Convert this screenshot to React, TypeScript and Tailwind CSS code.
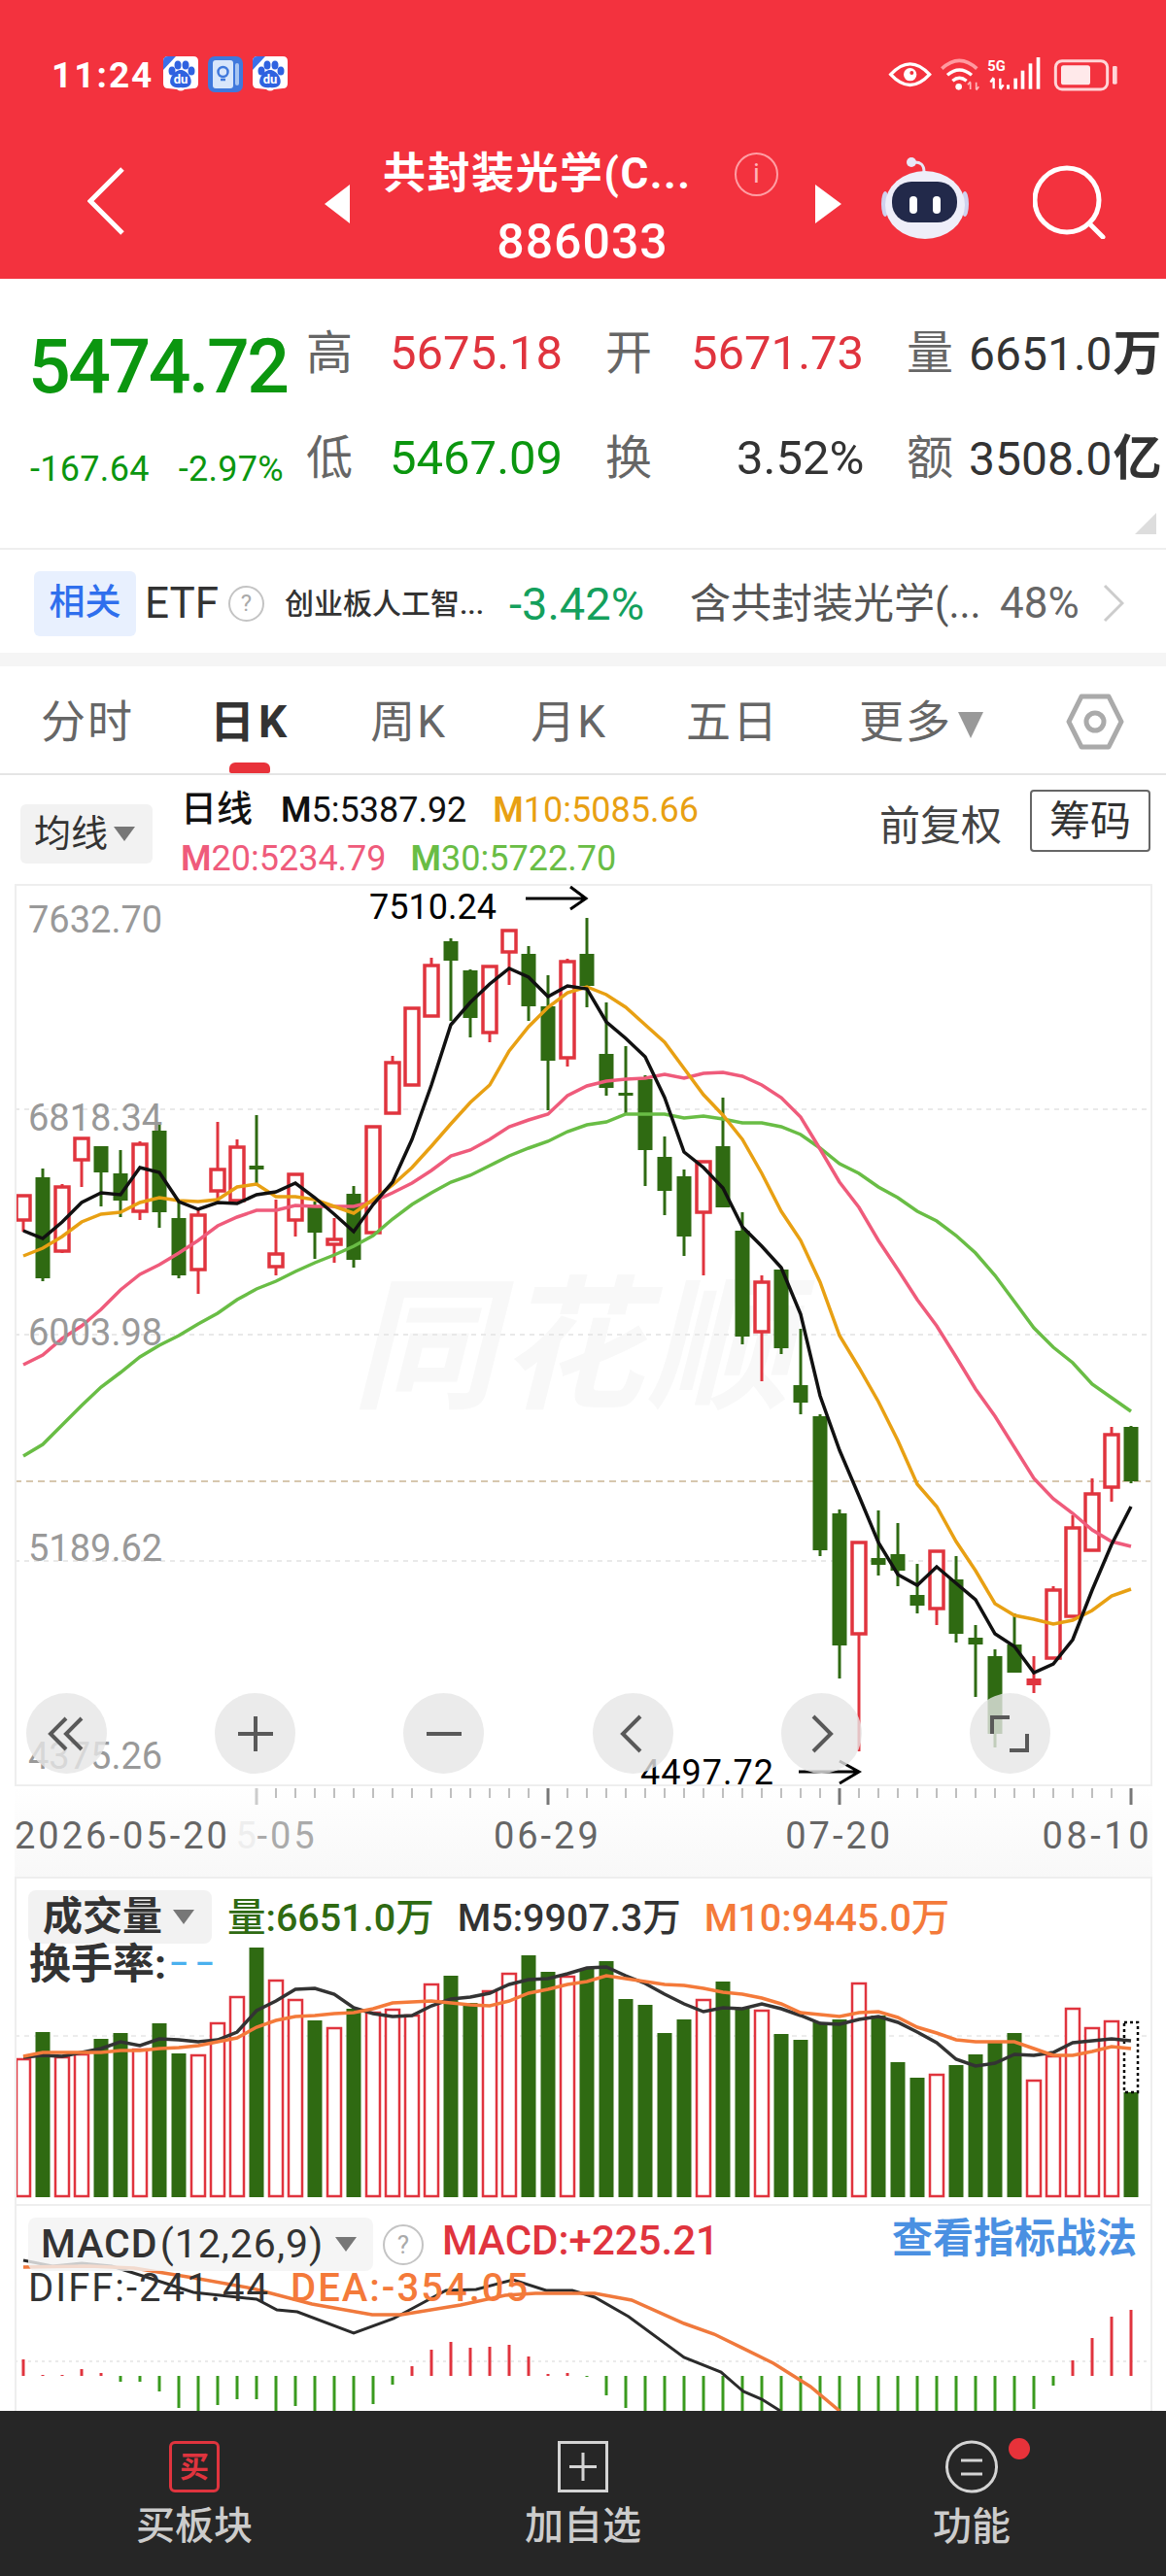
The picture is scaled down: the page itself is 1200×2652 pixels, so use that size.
const red = "#e0343e";
const green = "#2f6a12";

// page coordinates: [body top, body bottom, wick top, wick bottom, is red]
const candles: [number, number, number, number, number][] = [
  [1230, 1257, 1230, 1268, 1], [1212, 1316, 1203, 1319, 0], [1221, 1289, 1219, 1290, 1], [1171, 1195, 1171, 1222, 1],
  [1180, 1207, 1180, 1242, 0], [1208, 1236, 1184, 1253, 0], [1177, 1248, 1175, 1256, 1], [1164, 1248, 1157, 1264, 0],
  [1254, 1313, 1237, 1316, 0], [1250, 1308, 1243, 1332, 1], [1203, 1227, 1155, 1237, 1], [1180, 1237, 1173, 1237, 1],
  [1200, 1204, 1148, 1220, 0], [1290, 1305, 1235, 1313, 1], [1208, 1257, 1208, 1273, 1], [1243, 1269, 1237, 1296, 0],
  [1275, 1282, 1254, 1300, 1], [1229, 1297, 1221, 1305, 0], [1159, 1270, 1159, 1270, 1], [1093, 1147, 1087, 1147, 1],
  [1037, 1118, 1037, 1118, 1], [993, 1047, 986, 1047, 1], [969, 989, 966, 1051, 0], [999, 1048, 998, 1068, 0],
  [994, 1064, 994, 1073, 1], [957, 981, 957, 1014, 1], [982, 1036, 974, 1051, 0], [1036, 1092, 1004, 1143, 0],
  [989, 1090, 987, 1098, 1], [982, 1015, 945, 1037, 0], [1085, 1120, 1032, 1128, 0], [1125, 1128, 1077, 1147, 0],
  [1111, 1184, 1107, 1221, 0], [1191, 1226, 1170, 1251, 0], [1211, 1273, 1204, 1293, 0], [1195, 1249, 1195, 1313, 1],
  [1180, 1243, 1130, 1243, 0], [1267, 1376, 1248, 1384, 0], [1319, 1372, 1313, 1422, 1], [1307, 1388, 1307, 1394, 0],
  [1426, 1444, 1368, 1456, 0], [1458, 1596, 1456, 1602, 0], [1558, 1694, 1554, 1728, 0], [1587, 1683, 1587, 1803, 1],
  [1604, 1611, 1555, 1622, 0], [1600, 1617, 1568, 1633, 0], [1642, 1653, 1610, 1661, 0], [1596, 1657, 1596, 1673, 1],
  [1626, 1682, 1602, 1691, 0], [1686, 1693, 1673, 1747, 0], [1705, 1785, 1698, 1799, 0], [1693, 1722, 1661, 1722, 0],
  [1728, 1735, 1705, 1743, 2], [1636, 1708, 1633, 1708, 1], [1572, 1665, 1560, 1665, 1], [1537, 1597, 1522, 1597, 1],
  [1476, 1532, 1469, 1546, 1], [1469, 1525, 1468, 1527, 0],
];

const m5 = [1267, 1275, 1258, 1238, 1228, 1230, 1202, 1207, 1237, 1245, 1238, 1239, 1230, 1227, 1218, 1233, 1250, 1268, 1240, 1217, 1173, 1117, 1055, 1032, 1013, 997, 1006, 1026, 1015, 1018, 1052, 1069, 1088, 1130, 1186, 1202, 1223, 1263, 1283, 1305, 1353, 1437, 1493, 1540, 1588, 1621, 1632, 1613, 1630, 1647, 1682, 1695, 1722, 1713, 1688, 1637, 1590, 1551];
const m10 = [1293, 1285, 1273, 1258, 1250, 1248, 1238, 1233, 1236, 1237, 1235, 1222, 1219, 1232, 1232, 1235, 1242, 1249, 1235, 1220, 1202, 1180, 1157, 1135, 1117, 1082, 1057, 1037, 1022, 1016, 1024, 1037, 1055, 1073, 1100, 1127, 1148, 1173, 1208, 1247, 1277, 1320, 1375, 1408, 1443, 1483, 1528, 1551, 1587, 1617, 1651, 1663, 1667, 1672, 1668, 1658, 1643, 1636];
const m20 = [1405, 1395, 1378, 1365, 1348, 1328, 1312, 1302, 1290, 1277, 1262, 1253, 1246, 1246, 1241, 1242, 1242, 1242, 1237, 1228, 1218, 1205, 1190, 1184, 1173, 1160, 1153, 1147, 1128, 1118, 1113, 1111, 1110, 1106, 1110, 1105, 1104, 1108, 1117, 1130, 1150, 1183, 1217, 1243, 1277, 1307, 1338, 1365, 1397, 1430, 1458, 1490, 1522, 1543, 1558, 1575, 1587, 1592];
const m30 = [1499, 1487, 1467, 1447, 1428, 1413, 1397, 1385, 1375, 1363, 1352, 1338, 1327, 1319, 1309, 1300, 1292, 1283, 1272, 1255, 1240, 1228, 1217, 1210, 1200, 1190, 1182, 1175, 1165, 1158, 1155, 1147, 1147, 1147, 1151, 1149, 1152, 1156, 1156, 1160, 1168, 1182, 1198, 1208, 1222, 1233, 1247, 1257, 1272, 1290, 1313, 1340, 1367, 1387, 1403, 1425, 1439, 1453];

const volTops = [2120, 2092, 2118, 2115, 2099, 2093, 2110, 2083, 2114, 2116, 2083, 2056, 2005, 2039, 2059, 2080, 2088, 2068, 2072, 2069, 2075, 2043, 2034, 2062, 2050, 2032, 2013, 2030, 2035, 2027, 2019, 2058, 2064, 2093, 2079, 2059, 2040, 2068, 2070, 2094, 2100, 2082, 2079, 2042, 2075, 2123, 2139, 2136, 2126, 2115, 2103, 2093, 2142, 2117, 2068, 2088, 2081, 2154];
const volRed = [1, 0, 1, 1, 0, 0, 1, 0, 0, 1, 1, 1, 0, 1, 1, 0, 1, 0, 1, 1, 1, 1, 0, 0, 1, 1, 0, 0, 1, 0, 0, 0, 0, 0, 0, 1, 0, 0, 1, 0, 0, 0, 0, 1, 0, 0, 0, 1, 0, 0, 0, 0, 1, 1, 1, 1, 1, 0];
const volM5 = [2118, 2116, 2117, 2113, 2109, 2102, 2106, 2099, 2100, 2102, 2100, 2092, 2070, 2060, 2048, 2047, 2053, 2067, 2073, 2076, 2075, 2065, 2058, 2056, 2052, 2043, 2038, 2037, 2032, 2026, 2025, 2034, 2042, 2053, 2063, 2071, 2067, 2068, 2063, 2068, 2075, 2083, 2084, 2079, 2076, 2082, 2092, 2103, 2120, 2127, 2124, 2115, 2116, 2113, 2103, 2101, 2099, 2101];
const volM10 = [2117, 2113, 2113, 2113, 2113, 2111, 2111, 2109, 2108, 2106, 2102, 2098, 2087, 2080, 2076, 2075, 2073, 2072, 2068, 2062, 2061, 2060, 2062, 2064, 2065, 2060, 2052, 2048, 2043, 2040, 2034, 2037, 2040, 2043, 2044, 2047, 2051, 2053, 2057, 2063, 2072, 2074, 2076, 2072, 2071, 2077, 2087, 2093, 2100, 2102, 2102, 2102, 2109, 2116, 2116, 2112, 2107, 2109];

const macdEnds = [2429, 2445, 2445, 2439, 2443, 2452, 2452, 2462, 2479, 2482, 2476, 2470, 2470, 2483, 2477, 2483, 2483, 2483, 2475, 2455, 2436, 2419, 2411, 2417, 2416, 2414, 2426, 2444, 2443, 2447, 2466, 2479, 2483, 2483, 2483, 2483, 2483, 2483, 2483, 2483, 2483, 2483, 2483, 2483, 2483, 2483, 2483, 2483, 2483, 2483, 2483, 2483, 2480, 2456, 2430, 2407, 2385, 2378];
const diff = "24,2327 54,2333 84,2330 115,2333 153,2345 199,2360 264,2367 285,2378 306,2380 364,2402 405,2387 459,2358 490,2357 528,2347 562,2358 589,2358 612,2365 647,2385 704,2427 742,2442 765,2462 784,2470 803,2482";
const dea = "24,2334 92,2333 138,2335 199,2345 260,2356 321,2372 383,2383 413,2383 474,2373 520,2363 551,2361 612,2361 650,2368 704,2392 735,2403 796,2433 834,2457 864,2482";

const cx = (i: number) => 24 + i * 20;
const points = (ys: number[]) => ys.map((y, i) => `${cx(i)},${y}`).join(" ");

function MainChart() {
  return (
    <svg width={1171} height={929} viewBox="15 910 1171 929" className="block">
      <text x={362} y={1438} fontSize={148} fontStyle="italic" fontWeight={700} fill="#f8f8f8" letterSpacing={4}>同花顺</text>
      {[1142, 1374, 1607].map((y) => (
        <line key={y} x1={15} x2={1186} y1={y} y2={y} stroke="#e2e2e2" strokeWidth={1.5} strokeDasharray="5 5" />
      ))}
      <line x1={15} x2={1186} y1={1525} y2={1525} stroke="#c9b594" strokeWidth={1.5} strokeDasharray="7 5" />
      {candles.map(([bt, bb, wt, wb, up], i) => {
        const x = cx(i);
        const color = up ? "#e0343e" : green;
        return (
          <g key={i}>
            <line x1={x} x2={x} y1={wt} y2={bt} stroke={color} strokeWidth={3} />
            <line x1={x} x2={x} y1={bb} y2={wb} stroke={color} strokeWidth={3} />
            {up === 1 ? (
              <rect x={x - 7} y={bt + 1} width={14} height={bb - bt - 2} fill="#fff" stroke={color} strokeWidth={3.5} />
            ) : (
              <rect x={x - 7.5} y={bt} width={15} height={bb - bt} fill={up === 2 ? color : green} />
            )}
          </g>
        );
      })}
      <polyline points={points(m30)} fill="none" stroke="#69bd45" strokeWidth={3.5} />
      <polyline points={points(m20)} fill="none" stroke="#ef5b7b" strokeWidth={3.5} />
      <polyline points={points(m10)} fill="none" stroke="#e8a013" strokeWidth={3.5} />
      <polyline points={points(m5)} fill="none" stroke="#111" strokeWidth={3.5} />
      <path d="M541 925H603M587 913L603 925L587 936" fill="none" stroke="#000" strokeWidth={3} />
      <path d="M822 1824H884M864 1813L884 1824L864 1836" fill="none" stroke="#000" strokeWidth={3} />
    </svg>
  );
}

function VolumeChart() {
  return (
    <svg width={1171} height={337} viewBox="15 1932 1171 337" className="block">
      <line x1={15} x2={1186} y1={2096} y2={2096} stroke="#e6e6e6" strokeWidth={1.5} strokeDasharray="5 5" />
      {volTops.map((top, i) => {
        const x = cx(i);
        return volRed[i] ? (
          <rect key={i} x={x - 7} y={top} width={14} height={2262 - top - 1} fill="#fff" stroke={red} strokeWidth={2.5} />
        ) : (
          <rect key={i} x={x - 7.5} y={top} width={15} height={2262 - top} fill={green} />
        );
      })}
      <rect x={1157} y={2082} width={14} height={72} fill="#fff" stroke="#000" strokeWidth={2.5} strokeDasharray="3 3" />
      <polyline points={points(volM5)} fill="none" stroke="#333" strokeWidth={3.5} />
      <polyline points={points(volM10)} fill="none" stroke="#f47a3a" strokeWidth={3.5} />
    </svg>
  );
}

function MacdChart() {
  return (
    <svg width={1171} height={213} viewBox="15 2269 1171 213" className="block">
      <line x1={15} x2={1186} y1={2431} y2={2431} stroke="#e4e4e4" strokeWidth={1.5} strokeDasharray="3 4" />
      {macdEnds.map((end, i) => (
        <line key={i} x1={cx(i)} x2={cx(i)} y1={2446} y2={end} stroke={end < 2446 ? red : "#3a9a1e"} strokeWidth={3} />
      ))}
      <polyline points={diff} fill="none" stroke="#2b2b2b" strokeWidth={3} />
      <polyline points={dea} fill="none" stroke="#f0793c" strokeWidth={3.5} />
    </svg>
  );
}

function Ticks() {
  const xs: number[] = [];
  for (let x = 264; x <= 1164; x += 20) xs.push(x);
  return (
    <svg width={1171} height={20} viewBox="15 1839 1171 20" className="block">
      {xs.map((x) => {
        const major = (x - 264) % 300 === 0;
        return (
          <line key={x} x1={x} x2={x} y1={1841} y2={major ? 1858 : 1851} stroke={x === 264 ? "#ccc" : major ? "#777" : "#aaa"} strokeWidth={major ? 3 : 1.5} />
        );
      })}
    </svg>
  );
}

function BaiduIcon() {
  return (
    <svg width={36} height={37} viewBox="0 0 36 37" className="block">
      <path d="M5 0H31Q36 0 36 5V28Q36 33 31 33L22 34Q18 37 14 34L5 33Q0 33 0 28V5Q0 0 5 0Z" fill="#fff" />
      <path d="M0 14V5Q0 0 5 0H13Z" fill="#3b6fe8" />
      <g fill="#2f62e0">
        <ellipse cx={9} cy={15} rx={3.5} ry={4.5} />
        <ellipse cx={15} cy={9} rx={3.5} ry={4.5} />
        <ellipse cx={23} cy={9} rx={3.5} ry={4.5} />
        <ellipse cx={29} cy={15} rx={3.5} ry={4.5} />
        <path d="M18 14C25 14 31 24 28 29Q25 33 18 32Q11 33 8 29C5 24 11 14 18 14Z" />
      </g>
      <text x={18} y={28} fontSize={13} fontWeight={700} fill="#fff" textAnchor="middle">du</text>
    </svg>
  );
}

function BulbIcon() {
  return (
    <svg width={36} height={37} viewBox="0 0 36 37" className="block">
      <rect width={36} height={37} rx={7} fill="#3f78dc" />
      <rect x={5} y={4} width={21} height={29} rx={3} fill="#d8e6fb" />
      <rect x={28} y={7} width={4} height={23} rx={2} fill="#a7c5f2" />
      <circle cx={15.5} cy={16} r={5} fill="none" stroke="#3f78dc" strokeWidth={2.5} />
      <path d="M13 24H18" stroke="#3f78dc" strokeWidth={2.5} />
    </svg>
  );
}

function StatusIcons() {
  return (
    <svg width={270} height={55} viewBox="0 0 810 165" className="block">
      <path d="M50 80Q110 15 170 80Q110 145 50 80Z" fill="none" stroke="#fff" strokeWidth={10} />
      <circle cx={110} cy={80} r={20} fill="#fff" />
      <circle cx={115} cy={75} r={6} fill="#f3323e" />
      <path d="M208 62Q262 12 316 62" fill="none" stroke="#ff9aa0" strokeWidth={11} />
      <path d="M225 82Q262 50 300 82M241 100Q262 82 284 100" fill="none" stroke="#fff" strokeWidth={10} />
      <circle cx={260} cy={118} r={10} fill="#fff" />
      <path d="M296 104V126M288 112L296 102M314 104V126M322 118L314 128" stroke="#ffb8bc" strokeWidth={5} fill="none" />
      <text x={349} y={70} fontSize={44} fontWeight={700} fill="#fff" fontFamily="Roboto">5G</text>
      <path d="M368 92V124M358 104L368 90M388 92V124M398 112L388 126" stroke="#fff" strokeWidth={7} fill="none" />
      <g fill="#fff">
        <rect x={408} y={112} width={9} height={13} />
        <rect x={430} y={92} width={11} height={33} />
        <rect x={452} y={68} width={11} height={57} />
        <rect x={476} y={46} width={11} height={79} />
        <rect x={500} y={27} width={11} height={98} />
      </g>
      <rect x={559} y={38} width={160} height={88} rx={20} fill="none" stroke="#ffd5d7" strokeWidth={9} />
      <rect x={576} y={52} width={90} height={60} rx={8} fill="#ffe9ea" />
      <rect x={735} y={54} width={14} height={56} rx={4} fill="#ffd5d7" />
    </svg>
  );
}

function Robot() {
  return (
    <svg width={90} height={84} viewBox="0 0 90 84" className="block">
      <path d="M33 5Q44 4 44 15" fill="none" stroke="#e6e6f6" strokeWidth={3} />
      <circle cx={31} cy={5} r={5} fill="#e8e8f8" />
      <ellipse cx={4} cy={48} rx={4} ry={13} fill="#cfd2ee" />
      <ellipse cx={86} cy={48} rx={4} ry={13} fill="#cfd2ee" />
      <ellipse cx={45} cy={49} rx={41} ry={35} fill="#eeeef9" />
      <rect x={11} y={25} width={67} height={42} rx={20} fill="#22294a" />
      <rect x={29} y={40} width={8} height={18} rx={4} fill="#fff" />
      <rect x={53} y={40} width={8} height={18} rx={4} fill="#fff" />
    </svg>
  );
}

function Triangle({ className }: { className: string }) {
  return <span className={`inline-block h-0 w-0 border-x-[11px] border-t-[15px] border-x-transparent ${className}`} />;
}

function HelpDot({ size, text }: { size: string; text: string }) {
  return (
    <span className={`flex items-center justify-center rounded-full border-2 border-[#c4c4c4] text-[#aaa] ${size} ${text}`}>?</span>
  );
}

function RoundButton({ children }: { children: React.ReactNode }) {
  return (
    <span className="flex h-[83px] w-[83px] items-center justify-center rounded-full bg-[#e6e6e6]/80">
      <svg width={44} height={44} viewBox="0 0 44 44" fill="none" stroke="#595959" strokeWidth={4} className="block">
        {children}
      </svg>
    </span>
  );
}

function AxisLabel({ top, children }: { top: string; children: string }) {
  return <span className={`absolute left-[14px] text-[38px] leading-none text-[#999] ${top}`}>{children}</span>;
}

function Ma({ name, value }: { name: string; value: string }) {
  return (
    <span>
      <b className="font-semibold">M</b>
      {name}:{value}
    </span>
  );
}

export default function App() {
  return (
    <div className="w-[1200px] overflow-hidden bg-white font-['Roboto','Noto_Sans_CJK_SC',sans-serif]">
      <header className="h-[287px] bg-[#f3323e] text-white">
        <div className="flex h-[150px] items-start pt-[50px]">
          <span className="ml-[53px] text-[37px] leading-[55px] font-bold tracking-[2px]">11:24</span>
          <div className="ml-[10px] mt-[8px] flex gap-[10px]">
            <BaiduIcon />
            <BulbIcon />
            <BaiduIcon />
          </div>
          <div className="ml-auto mr-[30px]">
            <StatusIcons />
          </div>
        </div>
        <div className="flex items-start">
          <svg width={38} height={70} viewBox="0 0 38 70" fill="none" stroke="#fff" strokeWidth={5} className="ml-[90px] mt-[22px] block">
            <path d="M36 2L3 35L36 68" />
          </svg>
          <span className="ml-[206px] mt-[40px] h-0 w-0 border-y-[20px] border-r-[26px] border-y-transparent border-r-white" />
          <div className="w-[479px]">
            <div className="flex items-center pl-[34px] pt-[4px]">
              <span className="w-[362px] text-[44px] leading-[50px] font-bold tracking-[1.5px] whitespace-nowrap">共封装光学(C...</span>
              <span className="flex h-[45px] w-[45px] items-center justify-center rounded-full border-2 border-[#ff9ea4] text-[28px] text-[#ffb5b9]">i</span>
            </div>
            <div className="mt-[20px] text-center text-[50px] leading-[50px] font-medium tracking-[1px]">886033</div>
          </div>
          <span className="mt-[40px] h-0 w-0 border-y-[20px] border-l-[27px] border-y-transparent border-l-white" />
          <div className="ml-[41px] mt-[12px]">
            <Robot />
          </div>
          <svg width={76} height={76} viewBox="0 0 76 76" fill="none" stroke="#fff" strokeWidth={5} className="ml-[66px] mt-[20px] block">
            <circle cx={35} cy={36} r={33} />
            <path d="M58 60L72 74" strokeLinecap="round" />
          </svg>
        </div>
      </header>

      <section className="grid h-[279px] grid-cols-[284px_88px_220px_90px_220px_64px_200px] grid-rows-[100px_110px] content-start border-b-2 border-[#eee] pl-[31px] pt-[48px]">
        <span className="-ml-[2px] text-[77px] leading-[86px] font-medium tracking-[-2.5px] text-[#0b960f]">5474.72</span>
        <span className="text-[48px] leading-[58px] text-[#666]">高</span>
        <span className="-ml-[2px] text-[49px] leading-[58px] text-[#e0343e]">5675.18</span>
        <span className="text-[48px] leading-[58px] text-[#666]">开</span>
        <span className="-ml-[2px] text-[49px] leading-[58px] text-[#e0343e]">5671.73</span>
        <span className="text-[48px] leading-[58px] text-[#666]">量</span>
        <span className="flex items-baseline text-[48px] leading-[58px] whitespace-nowrap text-[#333]">6651.0<b className="ml-[1px] text-[50px]">万</b></span>
        <span className="flex gap-[30px] pt-[26px] text-[36px] leading-[44px] tracking-[0.3px] text-[#0b960f]">
          <span>-167.64</span>
          <span>-2.97%</span>
        </span>
        <span className="pt-[8px] text-[48px] leading-[58px] text-[#666]">低</span>
        <span className="-ml-[2px] pt-[8px] text-[49px] leading-[58px] text-[#0b960f]">5467.09</span>
        <span className="pt-[8px] text-[48px] leading-[58px] text-[#666]">换</span>
        <span className="pl-[45px] pt-[8px] text-[49px] leading-[58px] text-[#333]">3.52%</span>
        <span className="pt-[8px] text-[48px] leading-[58px] text-[#666]">额</span>
        <span className="flex items-baseline pt-[8px] text-[48px] leading-[58px] whitespace-nowrap text-[#333]">3508.0<b className="ml-[1px] text-[50px]">亿</b></span>
      </section>
      <div className="relative h-0">
        <span className="absolute bottom-[16px] left-[1168px] h-0 w-0 border-b-[22px] border-l-[22px] border-b-[#ddd] border-l-transparent" />
      </div>

      <section className="flex h-[106px] items-center pl-[35px] pt-[4px]">
        <span className="flex h-[67px] w-[105px] items-center justify-center rounded-[6px] bg-[#e8f0fe] text-[37px] font-medium text-[#2f6fed]">相关</span>
        <span className="ml-[9px] text-[44px] leading-none text-[#333]">ETF</span>
        <HelpDot size="ml-[10px] h-[37px] w-[37px]" text="text-[24px]" />
        <span className="ml-[21px] w-[231px] text-[30px] font-medium whitespace-nowrap text-[#333]">创业板人工智...</span>
        <span className="w-[186px] text-[47px] leading-none text-[#14a05c]">-3.42%</span>
        <span className="w-[319px] text-[42px] whitespace-nowrap text-[#555]">含共封装光学(...</span>
        <span className="w-[106px] text-[44px] leading-none text-[#666]">48%</span>
        <svg width={22} height={40} viewBox="0 0 22 40" fill="none" stroke="#ccc" strokeWidth={3} className="block">
          <path d="M2 2L20 20L2 38" />
        </svg>
      </section>
      <div className="h-[14px] bg-[#f5f5f5]" />

      <nav className="relative flex h-[112px] items-center border-b-2 border-[#e5e5e5] pt-[4px] text-[46px] leading-none tracking-[2px] text-[#666]">
        <span className="ml-[42px]">分时</span>
        <span className="ml-[78px] font-bold tracking-[4px] text-[#333]">日K</span>
        <span className="ml-[82px]">周K</span>
        <span className="ml-[86px]">月K</span>
        <span className="ml-[81px]">五日</span>
        <span className="ml-[82px]">更多</span>
        <Triangle className="ml-[6px] mt-[6px] border-x-[13px] border-t-[27px] border-t-[#999]" />
        <svg width={60} height={58} viewBox="0 0 60 58" fill="none" stroke="#aaa" strokeWidth={5} className="ml-[85px] block">
          <path d="M16 3H44L57 29L44 55H16L3 29Z" strokeLinejoin="round" />
          <circle cx={30} cy={29} r={9} />
        </svg>
        <span className="absolute bottom-0 left-[236px] h-[11px] w-[42px] rounded-t-[6px] rounded-b-[2px] bg-[#e8323a]" />
      </nav>

      <section className="flex h-[112px] items-start pl-[21px]">
        <div className="mt-[30px] flex h-[61px] w-[136px] items-center rounded-[6px] bg-[#f2f2f2] pl-[14px] text-[38px] text-[#333]">
          均线
          <Triangle className="ml-[6px] border-t-[#777]" />
        </div>
        <div className="ml-[29px] mt-[11px] text-[36px] leading-[50px]">
          <div className="flex items-baseline text-[#111]">
            <span className="text-[37px] font-medium">日线</span>
            <span className="ml-[29px]"><Ma name="5" value="5387.92" /></span>
            <span className="ml-[27px] text-[#e8a013]"><Ma name="10" value="5085.66" /></span>
          </div>
          <div className="flex text-[#ef5b7b]">
            <Ma name="20" value="5234.79" />
            <span className="ml-[25px] text-[#69bd45]"><Ma name="30" value="5722.70" /></span>
          </div>
        </div>
        <span className="ml-auto mt-[28px] text-[42px] leading-[50px] text-[#444]">前复权</span>
        <span className="ml-[29px] mr-[16px] mt-[15px] flex h-[64px] w-[124px] items-center justify-center rounded-[4px] border-2 border-[#666] text-[42px] text-[#333]">筹码</span>
      </section>

      <section className="relative ml-[15px] h-[929px] w-[1171px]">
        <MainChart />
        <div className="absolute inset-0 border-2 border-[#eee]" />
        <AxisLabel top="top-[18px]">7632.70</AxisLabel>
        <AxisLabel top="top-[222px]">6818.34</AxisLabel>
        <AxisLabel top="top-[443px]">6003.98</AxisLabel>
        <AxisLabel top="top-[665px]">5189.62</AxisLabel>
        <AxisLabel top="top-[879px]">4375.26</AxisLabel>
        <span className="absolute left-[365px] top-[6px] text-[36px] leading-none text-black">7510.24</span>
        <span className="absolute left-[644px] top-[897px] text-[36px] leading-none tracking-[1px] text-black">4497.72</span>
        <div className="absolute left-[12px] top-[833px] flex w-[1054px] justify-between">
          <RoundButton><path d="M21 6L5 22L21 38M37 6L21 22L37 38" /></RoundButton>
          <RoundButton><path d="M22 4V40M4 22H40" /></RoundButton>
          <RoundButton><path d="M4 22H40" /></RoundButton>
          <RoundButton><path d="M30 4L12 22L30 40" /></RoundButton>
          <RoundButton><path d="M14 4L32 22L14 40" /></RoundButton>
          <RoundButton><path d="M4 22V5H22M40 22V39H22" /></RoundButton>
        </div>
      </section>

      <section className="ml-[15px] h-[93px] w-[1171px] bg-linear-to-b from-white to-[#f8f8f8]">
        <Ticks />
        <div className="mt-[9px] flex text-[38px] leading-[44px] tracking-[3px] whitespace-nowrap text-[#666]">
          <span className="w-[228px]">2026-05-20</span>
          <span className="w-[22px] text-[#eee]">5</span>
          <span className="w-[244px] text-[#aaa]">-05</span>
          <span className="w-[301px]">06-29</span>
          <span className="w-[265px]">07-20</span>
          <span className="tracking-[3.5px]">08-10</span>
        </div>
      </section>

      <section className="relative ml-[15px] h-[337px] w-[1171px]">
        <VolumeChart />
        <div className="absolute inset-0 border-x-2 border-t-2 border-[#eee]" />
        <div className="absolute left-[14px] top-[14px] flex h-[55px] w-[189px] items-center rounded-[8px] bg-[#f2f2f2] pl-[15px] text-[41px] font-bold text-[#333]">
          成交量
          <Triangle className="ml-[11px] border-t-[#777]" />
        </div>
        <div className="absolute left-[219px] top-[23px] flex text-[39.5px] leading-[40px] font-medium whitespace-nowrap">
          <span className="text-[#2f6a12]">量:6651.0万</span>
          <span className="ml-[24px] text-[#333]">M5:9907.3万</span>
          <span className="ml-[24px] text-[#f47a3a]">M10:9445.0万</span>
        </div>
        <div className="absolute left-[15px] top-[69px] flex items-center text-[43px] leading-[42px] font-bold text-[#333]">
          换手率:
          <span className="ml-[3px] text-[30px] tracking-[8px] text-[#4ab0ee]">––</span>
        </div>
      </section>

      <section className="relative ml-[15px] h-[213px] w-[1171px]">
        <MacdChart />
        <div className="absolute inset-0 border-x-2 border-t-2 border-[#eee]" />
        <div className="absolute left-[14px] top-[14px] flex h-[55px] w-[355px] items-center rounded-[8px] bg-[#f2f2f2]/80 pl-[13px] text-[41px] font-medium tracking-[1px] whitespace-nowrap text-[#333]">
          MACD<span className="ml-[2px] font-normal">(12,26,9)</span>
          <Triangle className="ml-[12px] border-t-[#777]" />
        </div>
        <HelpDot size="absolute left-[379px] top-[21px] h-[42px] w-[42px]" text="text-[26px]" />
        <span className="absolute left-[440px] top-[18px] text-[42px] leading-[40px] font-medium text-[#e0343e]">MACD:+225.21</span>
        <span className="absolute right-[16px] top-[14px] text-[42px] leading-[44px] font-bold text-[#4a90e2]">查看指标战法</span>
        <div className="absolute left-[14px] top-[67px] flex text-[40px] leading-[40px] tracking-[2px] whitespace-nowrap">
          <span className="text-[#333]">DIFF:-241.44</span>
          <span className="ml-[21px] font-medium text-[#f47a3a]">DEA:-354.05</span>
        </div>
      </section>

      <footer className="grid h-[170px] grid-cols-3 bg-[#262626] text-[40px] leading-[40px] font-medium text-[#ccc]">
        <div className="flex flex-col items-center pt-[31px]">
          <span className="flex h-[53px] w-[52px] items-center justify-center rounded-[6px] border-[3px] border-[#e0343e] text-[30px] leading-none font-bold text-[#e0343e]">买</span>
          <span className="mt-[15px]">买板块</span>
        </div>
        <div className="flex flex-col items-center pt-[31px]">
          <svg width={52} height={53} viewBox="0 0 52 53" fill="none" stroke="#d4d4d4" strokeWidth={3} className="block">
            <rect x={1.5} y={1.5} width={49} height={50} />
            <path d="M26 12V41M12 26.5H40" />
          </svg>
          <span className="mt-[15px]">加自选</span>
        </div>
        <div className="relative flex flex-col items-center pt-[30px]">
          <svg width={54} height={55} viewBox="0 0 54 55" fill="none" stroke="#d4d4d4" strokeWidth={3} className="block">
            <circle cx={27} cy={27.5} r={25.5} />
            <path d="M16 21H38M16 35H38" />
          </svg>
          <span className="mt-[15px]">功能</span>
          <span className="absolute left-[238px] top-[28px] h-[22px] w-[22px] rounded-full bg-[#e8323a]" />
        </div>
      </footer>
    </div>
  );
}
